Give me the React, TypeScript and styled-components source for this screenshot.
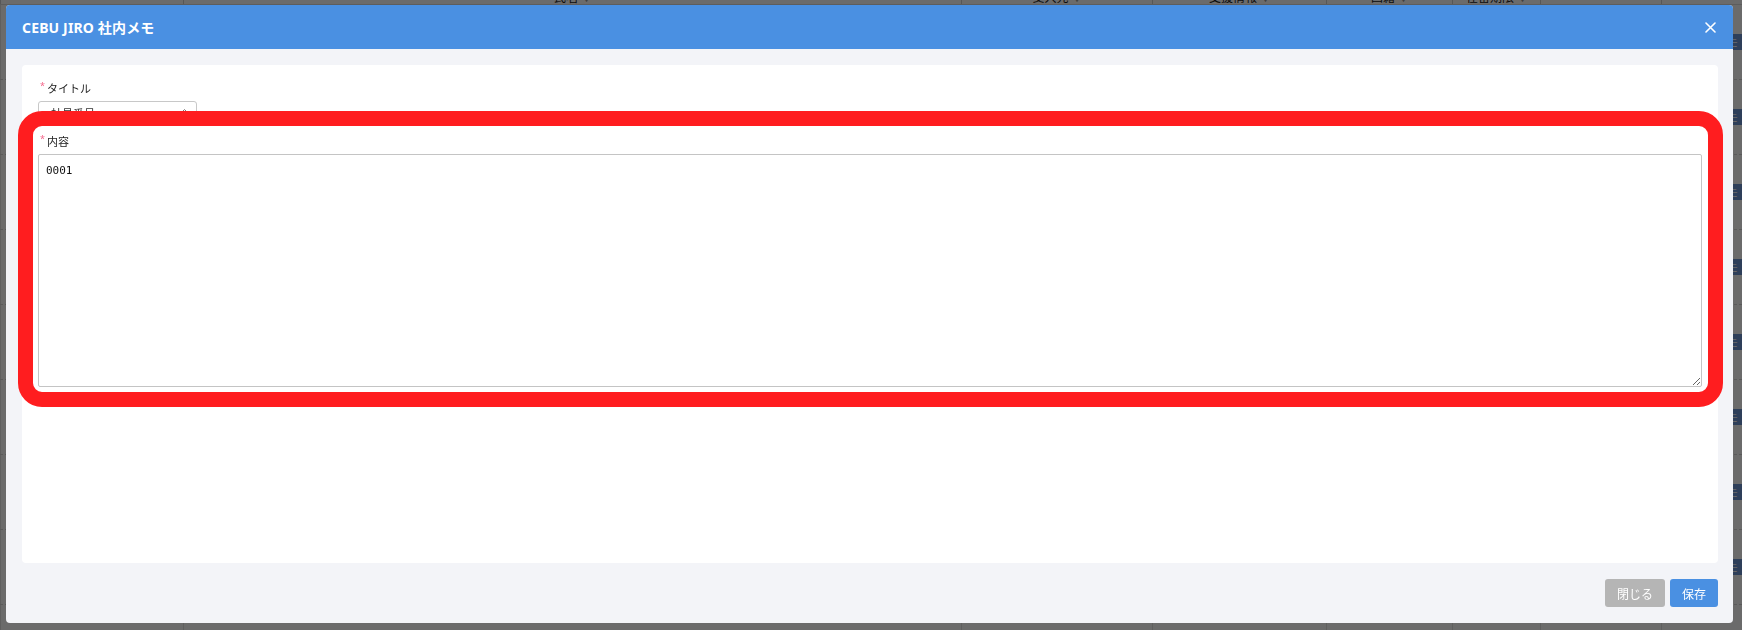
import React from "react";
import styled, { createGlobalStyle } from "styled-components";

const GlobalStyle = createGlobalStyle`
  html, body { margin: 0; padding: 0; }
  body {
    width: 1742px;
    height: 630px;
    overflow: hidden;
    font-family: "Noto Sans", "Noto Sans CJK JP", sans-serif;
  }
  * { box-sizing: border-box; }
`;

/* ---------- background page (behind the dimmed overlay) ---------- */
const Page = styled.div`
  width: 1742px;
  height: 630px;
  overflow: hidden;
  background: #ffffff;
  color: #222;
  font-size: 12px;
`;

const Grid = styled.div`
  display: grid;
  grid-template-columns: 183px 778px 191px 174px 126px 88px 121px 81px;
`;

const HeadRow = styled(Grid)`
  margin-top: -8px;
  height: 13px;
  align-items: center;
  border-bottom: 1px solid #ddd;
`;

const HeadCell = styled.div`
  display: flex;
  justify-content: center;
  align-items: center;
  gap: 4px;
  height: 100%;
  border-left: 1px solid #d0d0d0;
  font-size: 12px;
  line-height: 1;
`;

const Caret = styled.span`
  color: #999;
  font-size: 9px;
`;

const BodyRow = styled(Grid)`
  height: 75px;
  align-items: center;
  border-bottom: 1px dashed #d6d6d6;
`;

const BodyCell = styled.div<{ $end?: boolean }>`
  display: flex;
  align-items: center;
  justify-content: ${(p) => (p.$end ? "flex-end" : "flex-start")};
  height: 100%;
  padding: 0 6px;
  border-left: 1px solid #e2e2e2;
`;

const MemoButton = styled.span`
  display: inline-flex;
  align-items: center;
  height: 16px;
  padding: 0 6px;
  margin-right: -8px;
  background: #6f96d6;
  color: #fff;
  font-size: 11px;
  border-radius: 2px;
`;

/* ---------- overlay + modal ---------- */
const Overlay = styled.div`
  position: fixed;
  inset: 0;
  display: flex;
  padding: 5px 9px 7px 6px;
  background: rgba(0, 0, 0, 0.58);
`;

const Modal = styled.div`
  flex: 1;
  display: flex;
  flex-direction: column;
  background: #f3f4f8;
  border-radius: 4px;
  overflow: hidden;
`;

const Header = styled.div`
  height: 44px;
  flex: none;
  display: flex;
  align-items: center;
  justify-content: space-between;
  padding: 0 17px 0 16px;
  background: #4a90e2;
`;

const Title = styled.h1`
  margin: 0;
  color: #ffffff;
  font-size: 14px;
  font-weight: 700;
  letter-spacing: 0.15px;
`;

const CloseButton = styled.button`
  display: flex;
  align-items: center;
  justify-content: center;
  width: 12px;
  height: 12px;
  padding: 0;
  border: 0;
  background: transparent;
  cursor: pointer;
`;

const Body = styled.div`
  flex: 1;
  display: flex;
  flex-direction: column;
  padding: 16px 15px 16px 16px;
  gap: 16px;
`;

const Card = styled.div`
  flex: 1;
  display: flex;
  flex-direction: column;
  gap: 9px;
  padding: 16px;
  background: #ffffff;
  border-radius: 4px;
`;

const Field = styled.div`
  position: relative;
  display: flex;
  flex-direction: column;
  gap: 4px;
`;

const Label = styled.label`
  display: flex;
  align-items: flex-start;
  height: 16px;
  font-size: 11px;
  line-height: 16px;
  color: #222;
`;

const Required = styled.span`
  color: #f4668a;
  font-size: 9px;
  line-height: 9px;
  margin: 0 2px 0 2px;
`;

const SelectBox = styled.div`
  display: flex;
  align-items: center;
  justify-content: space-between;
  width: 159px;
  height: 24px;
  padding: 0 8px 0 12px;
  border: 1px solid #c8c8c8;
  border-radius: 3px;
  font-size: 11px;
  color: #333;
`;

const TextArea = styled.textarea`
  width: 100%;
  height: 233px;
  padding: 8px 7px;
  border: 1px solid #c4c4c4;
  border-radius: 2px;
  font-family: "DejaVu Sans Mono", "Liberation Mono", monospace;
  font-size: 11px;
  line-height: 16px;
  color: #111;
  resize: both;
  outline: none;
`;

const Highlight = styled.div`
  position: absolute;
  top: -23px;
  left: -20px;
  right: -21px;
  bottom: -20px;
  border: 15px solid #ff1d1f;
  border-radius: 24px;
  pointer-events: none;
`;

const Footer = styled.div`
  display: flex;
  justify-content: flex-end;
  gap: 5px;
  height: 28px;
  flex: none;
`;

const Button = styled.button<{ $primary?: boolean }>`
  height: 28px;
  padding: 0 12px;
  border: 0;
  border-radius: 3px;
  background: ${(p) => (p.$primary ? "#4a90e2" : "#b5b5b5")};
  color: #ffffff;
  font-family: "Noto Sans CJK JP", sans-serif;
  font-size: 12px;
  cursor: pointer;
`;

const columns = ["", "氏名", "受入先", "支援情報", "国籍", "在留期限", "", ""];

export default function App() {
  return (
    <>
      <GlobalStyle />
      <Page>
        <HeadRow>
          {columns.map((c, i) => (
            <HeadCell key={i}>
              {c}
              {c && <Caret>▼</Caret>}
            </HeadCell>
          ))}
        </HeadRow>
        {Array.from({ length: 9 }).map((_, r) => (
          <BodyRow key={r}>
            {columns.map((_, i) => (
              <BodyCell key={i} $end={i === columns.length - 1}>
                {i === columns.length - 1 && <MemoButton>メモ</MemoButton>}
              </BodyCell>
            ))}
          </BodyRow>
        ))}
      </Page>

      <Overlay>
        <Modal>
          <Header>
            <Title>CEBU JIRO 社内メモ</Title>
            <CloseButton aria-label="close">
              <svg width="11" height="11" viewBox="0 0 11 11">
                <path d="M1 1 L10 10 M10 1 L1 10" stroke="#fff" strokeWidth="1.6" strokeLinecap="round" />
              </svg>
            </CloseButton>
          </Header>
          <Body>
            <Card>
              <Field>
                <Label>
                  <Required>*</Required>タイトル
                </Label>
                <SelectBox>
                  社員番号
                  <svg width="7" height="11" viewBox="0 0 7 11">
                    <path d="M1 4 L3.5 1.5 L6 4 M1 7 L3.5 9.5 L6 7" stroke="#777" strokeWidth="1" fill="none" />
                  </svg>
                </SelectBox>
              </Field>
              <Field>
                <Label>
                  <Required>*</Required>内容
                </Label>
                <TextArea defaultValue="0001" />
                <Highlight />
              </Field>
            </Card>
            <Footer>
              <Button>閉じる</Button>
              <Button $primary>保存</Button>
            </Footer>
          </Body>
        </Modal>
      </Overlay>
    </>
  );
}
